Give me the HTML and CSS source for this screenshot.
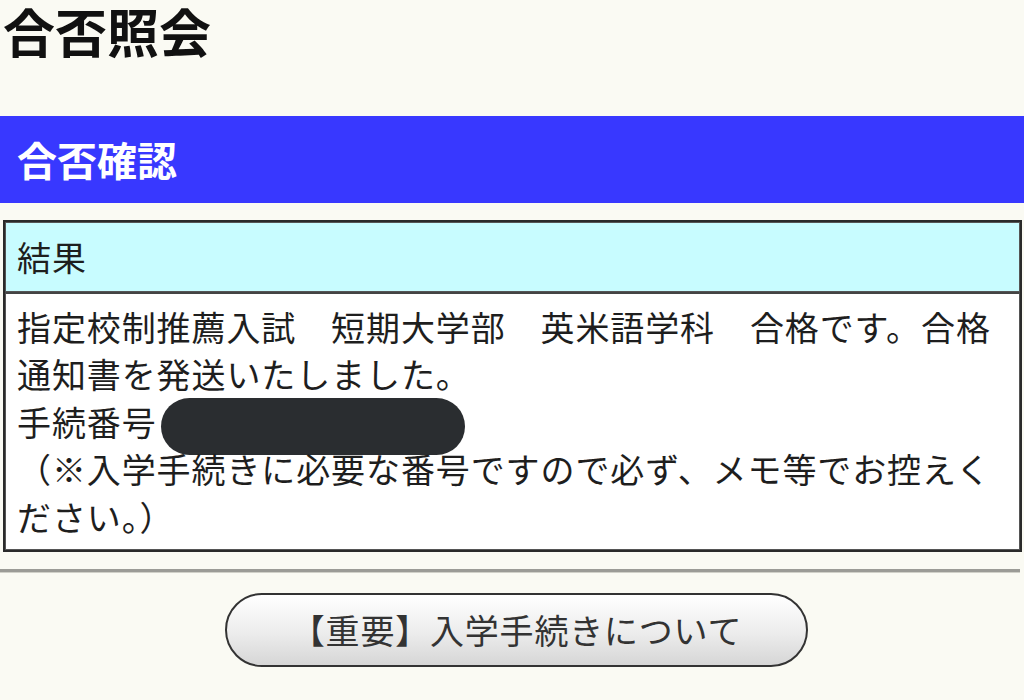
FILE: index.html
```html
<!DOCTYPE html>
<html lang="ja">
<head>
    <meta charset="UTF-8">
    <meta name="viewport" content="width=device-width, initial-scale=1.0">
    <title>合否照会</title>
    <link rel="stylesheet" href="styles.css">
</head>
<body>
    <h1 class="page-title">合否照会</h1>

    <h2 class="section-title">合否確認</h2>

    <table class="result">
        <tr>
            <th>結果</th>
        </tr>
        <tr>
            <td>
                指定校制推薦入試　短期大学部　英米語学科　合格です。合格<br>通知書を発送いたしました。<br>
                手続番号<span class="masked"></span><br>
                （※入学手続きに必要な番号ですので必ず、メモ等でお控えく<br>ださい。）
            </td>
        </tr>
    </table>

    <hr class="divider">

    <div class="actions">
        <a class="btn" href="#">【重要】入学手続きについて</a>
    </div>
</body>
</html>
```

FILE: styles.css
```css
body {
    margin: 0;
    background-color: #fafaf3;
    color: #1e1e1e;
    font-family: "Noto Sans CJK JP", "Noto Sans", sans-serif;
}

.page-title {
    margin: 0 0 54px;
    padding-left: 3px;
    font-size: 52px;
    line-height: 62px;
    font-weight: bold;
    color: #111;
}

.section-title {
    margin: 0 0 17px;
    padding-left: 17px;
    height: 87px;
    line-height: 87px;
    background: #3838ff;
    color: #fff;
    font-size: 40px;
    font-weight: bold;
}

.result {
    margin-left: 3px;
    width: 1019px;
    border: 2px solid #2a2a2a;
    border-spacing: 0;
    font-size: 34px;
    line-height: 47.5px;
    letter-spacing: 0.9px;
}

.result th,
.result td {
    border: 1px solid #555;
    text-align: left;
    font-weight: normal;
    padding: 9px 8px 9px 11px;
}

.result th {
    background: #c8fcff;
    padding-top: 10px;
    padding-bottom: 10px;
}

.result td {
    background: #fff;
    border-top: 2px solid #444;
}

.masked {
    display: inline-block;
    width: 304px;
    height: 57px;
    margin: -10px 0 -10px 4px;
    border-radius: 29px;
    background: #2a2d30;
    vertical-align: middle;
}

.divider {
    margin: 17px 4px 0 0;
    height: 0;
    border: none;
    border-top: 3px solid #9b9b96;
    border-bottom: 1px solid #d0d0c8;
}

.actions {
    display: flex;
    justify-content: center;
    padding: 20px 0 0 9px;
}

.btn {
    display: block;
    width: 579px;
    height: 70px;
    line-height: 70px;
    border: 2px solid #333;
    border-radius: 37px;
    background: linear-gradient(#ffffff, #ececec 55%, #d6d6d6);
    color: #333;
    font-size: 34px;
    letter-spacing: 0.8px;
    text-align: center;
    text-decoration: none;
}
```
